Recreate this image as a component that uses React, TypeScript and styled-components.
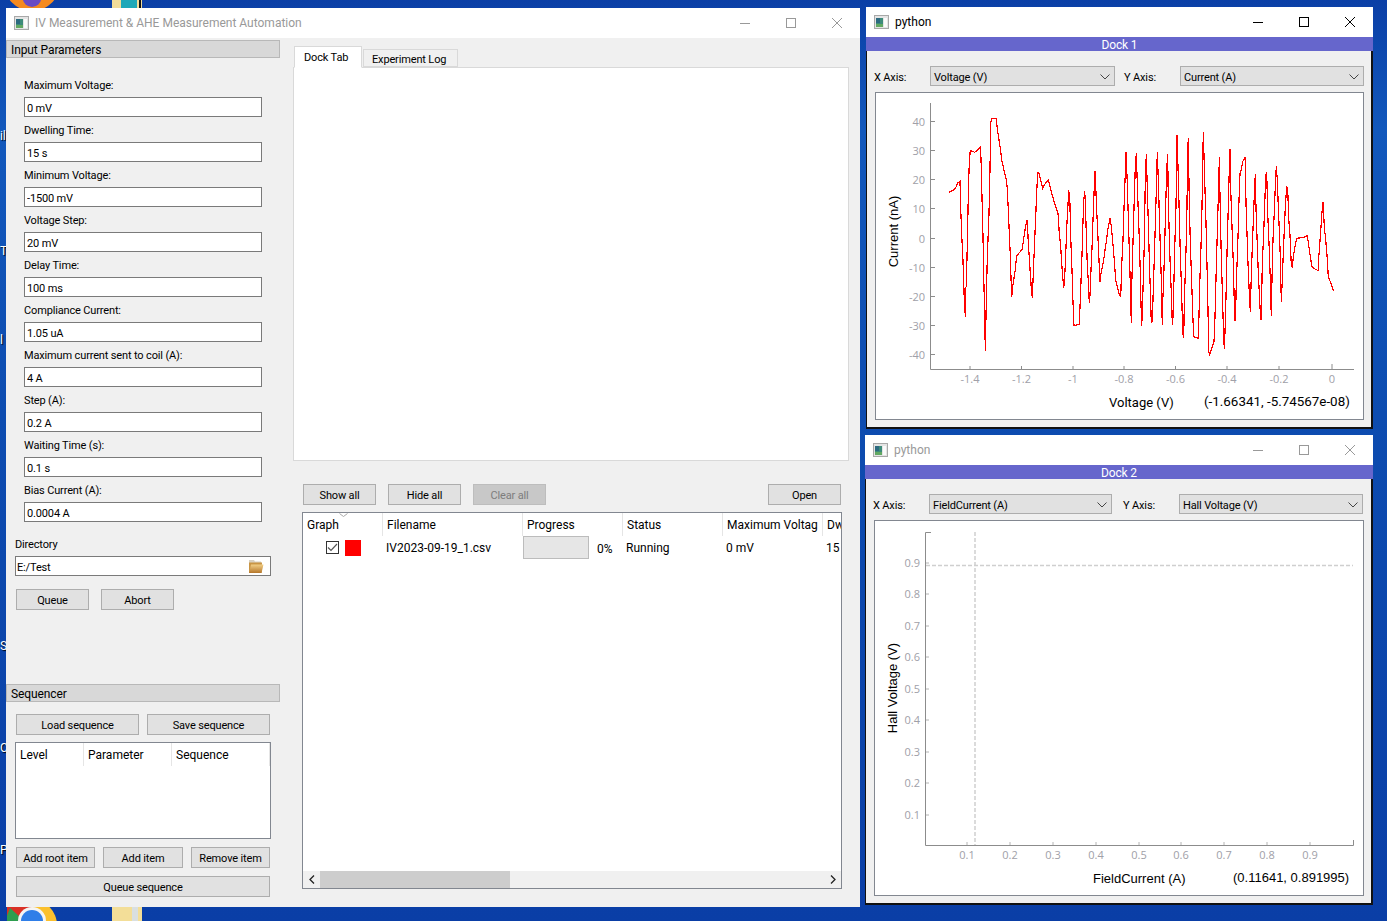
import styled, { createGlobalStyle } from 'styled-components';

const GlobalStyle = createGlobalStyle`
  html, body {
    margin: 0;
    padding: 0;
    width: 1387px;
    height: 921px;
    overflow: hidden;
  }
  * {
    box-sizing: border-box;
  }
  body {
    font-family: Roboto, 'Open Sans', sans-serif;
    font-size: 11px;
    letter-spacing: -0.15px;
    color: #000;
  }
`;

const PARAMETERS = [
  ['Maximum Voltage:', '0 mV'],
  ['Dwelling Time:', '15 s'],
  ['Minimum Voltage:', '-1500 mV'],
  ['Voltage Step:', '20 mV'],
  ['Delay Time:', '100 ms'],
  ['Compliance Current:', '1.05 uA'],
  ['Maximum current sent to coil (A):', '4 A'],
  ['Step (A):', '0.2 A'],
  ['Waiting Time (s):', '0.1 s'],
  ['Bias Current (A):', '0.0004 A'],
];

// traced from the reference, as page x/y * 3 relative to (870, 120)
const TRACE_A = [
  238,217, 246,212, 252,209, 258,201, 264,188, 270,184, 272,265, 275,345, 279,422, 281,500, 285,578, 287,590,
  285,505, 289,500, 291,413, 293,318, 295,222, 298,127, 301,91, 314,97, 325,88, 331,82, 333,115, 336,232,
  339,348, 341,466, 344,585, 346,692, 349,545, 352,413, 357,280, 360,147, 362,10, 365,-3, 378,-5, 384,40,
  391,85, 395,120, 402,150, 408,175, 412,205, 415,270, 418,340, 421,405, 423,475, 425,530, 428,500, 431,480,
  435,455, 440,407, 448,398, 457,388, 461,355, 466,325, 470,305, 472,300, 475,370, 478,415, 481,460, 484,505,
  487,533, 491,430, 494,360, 497,290, 500,215, 503,157, 506,157, 512,180, 518,205, 525,192, 535,180, 540,200,
  546,222, 552,245, 558,262, 564,280, 568,340, 572,380, 575,430, 578,470, 581,503, 583,490, 586,435, 590,325,
  593,268, 596,215, 599,220, 601,300, 603,375, 606,450, 608,525, 612,617, 628,613, 630,560, 633,485, 636,405,
  638,330, 641,245, 644,212, 646,245, 649,340, 652,435, 656,503, 658,550, 660,525, 663,450, 666,385, 669,300,
  672,220, 675,152, 678,220, 681,290, 684,355, 687,420, 690,485, 693,460, 697,440, 701,420, 705,390, 709,365,
  714,325, 720,295, 724,320, 727,350, 730,385, 733,420, 737,480, 742,500, 747,520, 752,532, 755,435, 759,360,
  762,265, 765,183, 768,97,
];

// same idea, relative to (1100, 120)
const TRACE_B = [
  82,190, 85,290, 88,390, 91,490, 93,585, 95,610, 94,535, 97,440, 100,335, 103,235, 106,140, 109,100, 112,190,
  115,275, 118,355, 121,460, 123,555, 125,617, 127,575, 130,480, 133,370, 136,180, 139,102, 142,205, 145,305,
  148,415, 151,510, 154,607, 157,605, 160,510, 163,415, 166,315, 169,210, 172,97, 175,180, 178,280, 181,380,
  184,480, 187,615, 186,580, 190,510, 193,420, 197,255, 200,150, 203,102, 205,245, 208,345, 211,445, 215,545,
  217,615, 219,590, 222,475, 225,355, 228,260, 231,45, 235,170, 238,285, 241,400, 245,525, 248,640, 251,655,
  253,550, 257,420, 260,320, 263,90, 265,55, 268,250, 271,365, 275,490, 279,600, 281,650, 295,655, 296,620,
  299,495, 303,380, 306,260, 310,37, 314,180, 318,310, 321,435, 324,570, 326,695, 329,705, 335,685, 342,665,
  345,590, 348,475, 351,370, 354,265, 357,160, 358,112, 361,280, 364,410, 367,510, 370,615, 373,688, 375,635,
  378,530, 381,400, 384,290, 387,180, 390,88, 392,205, 396,320, 400,430, 404,600, 407,600, 408,520, 411,435,
  414,350, 417,240, 420,160, 424,150, 428,125, 436,110, 438,250, 441,340, 444,430, 448,520, 451,575, 454,465,
  457,380, 460,305, 463,225, 466,162, 468,265, 471,350, 474,435, 478,520, 482,598, 484,598, 487,430, 491,340,
  494,255, 497,168, 500,157, 503,280, 507,370, 510,450, 514,587, 516,475, 519,360, 523,275, 526,200, 529,138,
  532,180, 535,260, 538,330, 541,410, 544,545, 547,480, 550,400, 553,330, 556,260, 560,202, 563,205, 566,295,
  570,345, 574,435, 577,443, 580,410, 585,380, 590,355, 612,352, 622,347, 626,375, 631,410, 636,440, 645,447,
  655,452, 656,415, 659,375, 662,335, 665,285, 669,245, 673,320, 677,360, 681,405, 685,470, 692,488, 701,514,
];

const toPoints = (trace: number[], ox: number, oy: number) => {
  const out: string[] = [];
  for (let i = 0; i < trace.length; i += 2) {
    out.push(`${(ox + trace[i] / 3).toFixed(1)},${(oy + trace[i + 1] / 3).toFixed(1)}`);
  }
  return out.join(' ');
};

const IV_POINTS = `${toPoints(TRACE_A, 870, 120)} ${toPoints(TRACE_B, 1100, 120)}`;

const WindowIcon = () => (
  <svg width="15" height="15" viewBox="0 0 15 15">
    <rect x="0.5" y="0.5" width="14" height="13" fill="#e4e4e4" stroke="#a8a8a8" />
    <rect x="2" y="3" width="7" height="9" fill="#3d8b7a" />
    <rect x="2" y="3" width="4" height="5" fill="#2c6a80" />
    <rect x="2" y="9" width="7" height="3" fill="#62a862" />
    <rect x="10" y="3" width="3" height="9" fill="#fafafa" />
  </svg>
);

const WindowButtons = ({ active }: { active?: boolean }) => {
  const stroke = active ? '#000' : '#999';
  return (
    <Caption>
      <CaptionButton>
        <svg width="10" height="10" viewBox="0 0 10 10">
          <path d="M0 5.5H10" stroke={stroke} fill="none" />
        </svg>
      </CaptionButton>
      <CaptionButton>
        <svg width="10" height="10" viewBox="0 0 10 10">
          <rect x="0.5" y="0.5" width="9" height="9" stroke={stroke} fill="none" />
        </svg>
      </CaptionButton>
      <CaptionButton>
        <svg width="10" height="10" viewBox="0 0 10 10">
          <path d="M0 0L10 10M10 0L0 10" stroke={stroke} fill="none" />
        </svg>
      </CaptionButton>
    </Caption>
  );
};

const Chevron = () => (
  <svg width="10" height="6" viewBox="0 0 10 6">
    <path d="M0.5 0.5L5 5L9.5 0.5" stroke="#444" fill="none" />
  </svg>
);

const FolderIcon = () => (
  <svg width="16" height="15" viewBox="0 0 16 15">
    <defs>
      <linearGradient id="folderFront" x1="0" y1="0" x2="0" y2="1">
        <stop offset="0" stopColor="#f2cf86" />
        <stop offset="1" stopColor="#b5762a" />
      </linearGradient>
    </defs>
    <path d="M1 1H6L7 2.5H13V6H1Z" fill="#d8d0c0" />
    <path d="M1 14L1 3.5H14L13.5 14Z" fill="#c99544" />
    <path d="M1 14L3 5.5H15.5L13.5 14Z" fill="url(#folderFront)" />
  </svg>
);

const DesktopIcons = () => (
  <>
    <DesktopIcon $left={4} $top={0} $width={56} $height={8}>
      <svg width="56" height="8" viewBox="0 0 56 8">
        <circle cx="28" cy="-17" r="28" fill="#f58a1f" />
        <circle cx="28" cy="-2.3" r="9.3" fill="#6a4bc4" />
      </svg>
    </DesktopIcon>
    <DesktopIcon $left={112} $top={0} $width={30} $height={8}>
      <svg width="30" height="8" viewBox="0 0 30 8">
        <rect x="0" y="0" width="30" height="8" fill="#f1dc9a" />
        <rect x="9" y="0" width="16" height="8" fill="#1fa8b8" />
        <rect x="27" y="0" width="2" height="8" fill="#111" />
      </svg>
    </DesktopIcon>
    <DesktopIcon $left={7} $top={905} $width={50} $height={16}>
      <svg width="50" height="16" viewBox="0 0 50 16">
        <circle cx="25" cy="20" r="25" fill="#fbc02d" />
        <path d="M25 20V-5H0V20Z" fill="#d93025" />
        <path d="M13 12L3 3L-2 16H13Z" fill="#2e9e4f" />
        <circle cx="25" cy="16" r="14" fill="#f4f4f4" />
        <circle cx="25" cy="16" r="11" fill="#2f7ee8" />
      </svg>
    </DesktopIcon>
    <DesktopIcon $left={112} $top={907} $width={30} $height={14}>
      <svg width="30" height="14" viewBox="0 0 30 14">
        <rect x="0" y="0" width="30" height="14" fill="#f3de98" />
        <rect x="20" y="0" width="6" height="14" fill="#d9dfe0" />
      </svg>
    </DesktopIcon>
    {[
      ['il', 129],
      ['T', 244],
      ['l', 333],
      ['S', 639],
      ['C', 741],
      ['P', 843],
    ].map(([text, top]) => (
      <EdgeLabel key={text} $top={top as number}>
        {text}
      </EdgeLabel>
    ))}
  </>
);

const Field = ({ label, value }: { label: string; value: string }) => (
  <FieldRow>
    <FieldLabel>{label}</FieldLabel>
    <TextInput readOnly value={value} />
  </FieldRow>
);

const MainWindow = () => (
  <Win $left={6} $top={8} $width={854} $height={899}>
    <TitleBar>
      <WindowIcon />
      <TitleText>IV Measurement &amp; AHE Measurement Automation</TitleText>
      <WindowButtons />
    </TitleBar>
    <MainBody>
      <LeftPane>
        <SectionHeader>Input Parameters</SectionHeader>
        <Form>
          {PARAMETERS.map(([label, value]) => (
            <Field key={label} label={label} value={value} />
          ))}
        </Form>
        <DirectoryBlock>
          <FieldLabel>Directory</FieldLabel>
          <DirectoryInput>
            <DirectoryText>E:/Test</DirectoryText>
            <FolderIcon />
          </DirectoryInput>
        </DirectoryBlock>
        <ButtonRow $top={13} $gap={12}>
          <PushButton $width={73}>Queue</PushButton>
          <PushButton $width={73}>Abort</PushButton>
        </ButtonRow>
        <SequencerBlock>
          <SectionHeader>Sequencer</SectionHeader>
          <ButtonRow $top={12} $gap={8}>
            <PushButton $width={123}>Load sequence</PushButton>
            <PushButton $width={123}>Save sequence</PushButton>
          </ButtonRow>
          <SequenceTree>
            <SeqHead $width={68}>Level</SeqHead>
            <SeqHead $width={88}>Parameter</SeqHead>
            <SeqHead $width={98}>Sequence</SeqHead>
          </SequenceTree>
          <ButtonRow $top={8} $gap={8}>
            <PushButton $width={79}>Add root item</PushButton>
            <PushButton $width={80}>Add item</PushButton>
            <PushButton $width={79}>Remove item</PushButton>
          </ButtonRow>
          <ButtonRow $top={8} $gap={0}>
            <PushButton $width={254}>Queue sequence</PushButton>
          </ButtonRow>
        </SequencerBlock>
      </LeftPane>
      <RightPane>
        <TabBar>
          <Tab $active>Dock Tab</Tab>
          <Tab>Experiment Log</Tab>
        </TabBar>
        <TabPane />
        <ResultsToolbar>
          <PushButton $width={73}>Show all</PushButton>
          <PushButton $width={73}>Hide all</PushButton>
          <PushButton $width={73} $disabled>
            Clear all
          </PushButton>
          <OpenButton $width={73}>Open</OpenButton>
        </ResultsToolbar>
        <ResultsTable>
          <SortArrow width="9" height="4" viewBox="0 0 9 4">
            <path d="M0.5 0.5L4.5 3.5L8.5 0.5" stroke="#a8a8a8" fill="none" />
          </SortArrow>
          <HeaderRow>
            <HeadCell $width={80}>Graph</HeadCell>
            <HeadCell $width={140}>Filename</HeadCell>
            <HeadCell $width={100}>Progress</HeadCell>
            <HeadCell $width={100}>Status</HeadCell>
            <HeadCell $width={100}>Maximum Voltag</HeadCell>
            <HeadCell $width={18} $last>
              Dw
            </HeadCell>
          </HeaderRow>
          <DataRow>
            <GraphCell>
              <CheckBox>
                <svg width="11" height="11" viewBox="0 0 11 11">
                  <path d="M1 5.5L4 8.5L10 2" stroke="#555" strokeWidth="1.2" fill="none" />
                </svg>
              </CheckBox>
              <Swatch />
            </GraphCell>
            <DataCell $width={140}>IV2023-09-19_1.csv</DataCell>
            <ProgressCell>
              <ProgressBar />
              <ProgressText>0%</ProgressText>
            </ProgressCell>
            <DataCell $width={100}>Running</DataCell>
            <DataCell $width={100}>0 mV</DataCell>
            <DataCell $width={18}>15</DataCell>
          </DataRow>
          <ScrollBar>
            <ScrollArrow>
              <svg width="6" height="9" viewBox="0 0 6 9">
                <path d="M5 0.5L1 4.5L5 8.5" stroke="#222" strokeWidth="1.3" fill="none" />
              </svg>
            </ScrollArrow>
            <ScrollTrack>
              <ScrollThumb />
            </ScrollTrack>
            <ScrollArrow>
              <svg width="6" height="9" viewBox="0 0 6 9">
                <path d="M1 0.5L5 4.5L1 8.5" stroke="#222" strokeWidth="1.3" fill="none" />
              </svg>
            </ScrollArrow>
          </ScrollBar>
        </ResultsTable>
      </RightPane>
    </MainBody>
  </Win>
);

const IvPlot = () => {
  const xTicks: [string, number][] = [
    ['-1.4', 970],
    ['-1.2', 1021.5],
    ['-1', 1073],
    ['-0.8', 1124],
    ['-0.6', 1175.5],
    ['-0.4', 1227],
    ['-0.2', 1279],
    ['0', 1332],
  ];
  const yTicks: [string, number][] = [
    ['40', 121.5],
    ['30', 150.5],
    ['20', 179.5],
    ['10', 208.5],
    ['0', 238.5],
    ['-10', 267.5],
    ['-20', 296.5],
    ['-30', 325.5],
    ['-40', 354.5],
  ];
  return (
    <PlotBox>
      <svg width="487" height="326" viewBox="876 93 487 326">
        <path d="M930.5 103V369.5H1354" stroke="#8c8c8c" fill="none" />
        {xTicks.map(([text, x]) => (
          <g key={text}>
            <path d={`M${x} 369V${text === '0' ? 364 : 366}`} stroke="#8c8c8c" />
            <TickText x={x} y={383} textAnchor="middle">
              {text}
            </TickText>
          </g>
        ))}
        {yTicks.map(([text, y]) => (
          <g key={text}>
            <path d={`M931 ${y}H935`} stroke="#8c8c8c" />
            <TickText x={925} y={y + 4} textAnchor="end">
              {text}
            </TickText>
          </g>
        ))}
        <polyline
          points={IV_POINTS}
          stroke="#ff0000"
          strokeWidth="1.2"
          fill="none"
          shapeRendering="crispEdges"
        />
        <AxisText $size={13} x={1109} y={407}>
          Voltage (V)
        </AxisText>
        <AxisText $size={13.4} x={1204} y={406}>
          (-1.66341, -5.74567e-08)
        </AxisText>
        <PlainAxisText x={0} y={0} textAnchor="middle" transform="translate(898 231.5) rotate(-90)">
          Current (nA)
        </PlainAxisText>
      </svg>
    </PlotBox>
  );
};

const HallPlot = () => {
  const xTicks: [string, number][] = [
    ['0.1', 967],
    ['0.2', 1010],
    ['0.3', 1053],
    ['0.4', 1096],
    ['0.5', 1139],
    ['0.6', 1181],
    ['0.7', 1224],
    ['0.8', 1267],
    ['0.9', 1310],
  ];
  const yTicks: [string, number][] = [
    ['0.9', 563],
    ['0.8', 594],
    ['0.7', 626],
    ['0.6', 657],
    ['0.5', 689],
    ['0.4', 720],
    ['0.3', 752],
    ['0.2', 783],
    ['0.1', 815],
  ];
  return (
    <PlotBox>
      <svg width="488" height="374" viewBox="875 521 488 374">
        <path d="M931 532.5H925.5V845.5H1353.5V840" stroke="#8c8c8c" fill="none" />
        {xTicks.map(([text, x]) => (
          <g key={text}>
            <path d={`M${x} 845V842`} stroke="#b4b4b4" />
            <TickText x={x} y={859} textAnchor="middle">
              {text}
            </TickText>
          </g>
        ))}
        {yTicks.map(([text, y]) => (
          <g key={text}>
            <path d={`M926 ${y}H929`} stroke="#b4b4b4" />
            <TickText x={920} y={y + 4} textAnchor="end">
              {text}
            </TickText>
          </g>
        ))}
        <path
          d="M975 532V845M926 565.5H1353"
          stroke="#cfcfcf"
          strokeWidth="1.5"
          strokeDasharray="4 2"
          fill="none"
        />
        <PlainAxisText x={1093} y={883}>
          FieldCurrent (A)
        </PlainAxisText>
        <PlainAxisText x={1233} y={882}>
          (0.11641, 0.891995)
        </PlainAxisText>
        <PlainAxisText x={0} y={0} textAnchor="middle" transform="translate(897 688) rotate(-90)">
          Hall Voltage (V)
        </PlainAxisText>
      </svg>
    </PlotBox>
  );
};

const App = () => (
  <>
    <GlobalStyle />
    <Desktop>
      <DesktopIcons />
      <MainWindow />
      <Win $left={866} $top={7} $width={507} $height={422}>
        <TitleBar>
          <WindowIcon />
          <TitleText $active>python</TitleText>
          <WindowButtons active />
        </TitleBar>
        <DockBar>Dock 1</DockBar>
        <DockBody>
          <AxisRow>
            <AxisLabel>X Axis:</AxisLabel>
            <ComboBox $width={185}>
              Voltage (V)
              <Chevron />
            </ComboBox>
            <AxisLabel $gap={9}>Y Axis:</AxisLabel>
            <ComboBox $width={184}>
              Current (A)
              <Chevron />
            </ComboBox>
          </AxisRow>
          <IvPlot />
        </DockBody>
      </Win>
      <Win $left={865} $top={435} $width={508} $height={470}>
        <TitleBar>
          <WindowIcon />
          <TitleText>python</TitleText>
          <WindowButtons />
        </TitleBar>
        <DockBar>Dock 2</DockBar>
        <DockBody>
          <AxisRow>
            <AxisLabel>X Axis:</AxisLabel>
            <ComboBox $width={183}>
              FieldCurrent (A)
              <Chevron />
            </ComboBox>
            <AxisLabel $gap={11}>Y Axis:</AxisLabel>
            <ComboBox $width={184}>
              Hall Voltage (V)
              <Chevron />
            </ComboBox>
          </AxisRow>
          <HallPlot />
        </DockBody>
      </Win>
    </Desktop>
  </>
);

export default App;

const Desktop = styled.div`
  position: relative;
  width: 1387px;
  height: 921px;
  overflow: hidden;
  background: linear-gradient(180deg, #0b3fa6 0%, #1258bc 14%, #0d4cb0 45%, #0a3ea6 100%);
`;
const DesktopIcon = styled.div<{ $left: number; $top: number; $width: number; $height: number }>`
  position: absolute;
  left: ${props => props.$left}px;
  top: ${props => props.$top}px;
  width: ${props => props.$width}px;
  height: ${props => props.$height}px;
  overflow: hidden;
  svg {
    display: block;
  }
`;
const EdgeLabel = styled.span<{ $top: number }>`
  position: absolute;
  left: 0;
  top: ${props => props.$top}px;
  color: #fff;
  font-size: 12px;
  line-height: 14px;
  text-shadow: 1px 1px 1px #000;
`;
const Win = styled.div<{ $left: number; $top: number; $width: number; $height: number }>`
  position: absolute;
  left: ${props => props.$left}px;
  top: ${props => props.$top}px;
  width: ${props => props.$width}px;
  height: ${props => props.$height}px;
  display: flex;
  flex-direction: column;
  background-color: #f0f0f0;
`;
const TitleBar = styled.div`
  flex: none;
  display: flex;
  align-items: center;
  height: 30px;
  padding-left: 8px;
  background-color: #fff;
`;
const TitleText = styled.span<{ $active?: boolean }>`
  margin-left: 6px;
  flex: auto;
  font-size: 12px;
  letter-spacing: 0;
  color: ${props => (props.$active ? '#000' : '#999')};
`;
const Caption = styled.div`
  display: flex;
  height: 100%;
`;
const CaptionButton = styled.div`
  width: 46px;
  display: flex;
  align-items: center;
  justify-content: center;
  svg {
    display: block;
  }
`;
const MainBody = styled.div`
  flex: auto;
  display: flex;
  min-height: 0;
`;
const LeftPane = styled.div`
  flex: none;
  width: 274px;
  display: flex;
  flex-direction: column;
  padding: 2px 0 10px;
`;
const SectionHeader = styled.div`
  flex: none;
  height: 18px;
  padding-left: 4px;
  line-height: 19px;
  font-size: 12px;
  letter-spacing: -0.1px;
  background-color: #d8d8d8;
  border: 1px solid #b8b8b8;
`;
const Form = styled.div`
  padding: 14px 0 0 18px;
`;
const FieldRow = styled.div`
  width: 238px;
`;
const FieldLabel = styled.label`
  display: block;
  height: 25px;
  line-height: 27px;
  white-space: nowrap;
`;
const TextInput = styled.input`
  display: block;
  width: 100%;
  height: 20px;
  padding: 2px 2px 0;
  font: inherit;
  letter-spacing: inherit;
  color: #000;
  background-color: #fff;
  border: 1px solid #7a7a7a;
  border-radius: 0;
  outline: none;
`;
const DirectoryBlock = styled.div`
  margin: 9px 0 0 9px;
  width: 256px;
`;
const DirectoryInput = styled.div`
  display: flex;
  align-items: center;
  justify-content: space-between;
  height: 20px;
  padding: 0 6px 0 1px;
  background-color: #fff;
  border: 1px solid #7a7a7a;
`;
const DirectoryText = styled.span`
  padding-top: 2px;
`;
const ButtonRow = styled.div<{ $top: number; $gap: number }>`
  flex: none;
  display: flex;
  gap: ${props => props.$gap}px;
  margin: ${props => props.$top}px 0 0 10px;
`;
const PushButton = styled.div<{ $width: number; $disabled?: boolean }>`
  flex: none;
  width: ${props => props.$width}px;
  height: 21px;
  line-height: 21px;
  text-align: center;
  color: ${props => (props.$disabled ? '#7d7d7d' : '#000')};
  background-color: ${props => (props.$disabled ? '#c8c8c8' : '#e1e1e1')};
  border: 1px solid ${props => (props.$disabled ? '#bdbdbd' : '#adadad')};
`;
const OpenButton = styled(PushButton)`
  margin-left: auto;
`;
const SequencerBlock = styled.div`
  margin-top: auto;
  display: flex;
  flex-direction: column;
`;
const SequenceTree = styled.div`
  flex: none;
  display: flex;
  align-items: flex-start;
  margin: 7px 0 0 9px;
  width: 256px;
  height: 97px;
  font-size: 12px;
  letter-spacing: 0;
  background-color: #fff;
  border: 1px solid #828790;
`;
const SeqHead = styled.div<{ $width: number }>`
  width: ${props => props.$width}px;
  height: 23px;
  line-height: 25px;
  padding-left: 4px;
  border-right: 1px solid #e5e5e5;
`;
const RightPane = styled.div`
  flex: auto;
  display: flex;
  flex-direction: column;
  min-width: 0;
  padding: 8px 11px 0 13px;
`;
const TabBar = styled.div`
  flex: none;
  display: flex;
  align-items: flex-end;
  height: 21px;
  padding-left: 1px;
`;
const Tab = styled.div<{ $active?: boolean }>`
  height: ${props => (props.$active ? 22 : 18)}px;
  margin-bottom: ${props => (props.$active ? -1 : 0)}px;
  margin-right: 1px;
  padding: 0 ${props => (props.$active ? 9 : 8)}px;
  width: ${props => (props.$active ? 68 : 95)}px;
  line-height: ${props => (props.$active ? 22 : 19)}px;
  white-space: nowrap;
  background-color: ${props => (props.$active ? '#fff' : '#f0f0f0')};
  border: 1px solid #d9d9d9;
  border-bottom-color: ${props => (props.$active ? '#fff' : '#d9d9d9')};
  position: relative;
  z-index: ${props => (props.$active ? 1 : 0)};
`;
const TabPane = styled.div`
  flex: none;
  height: 394px;
  background-color: #fff;
  border: 1px solid #d9d9d9;
`;
const ResultsToolbar = styled.div`
  flex: none;
  display: flex;
  gap: 12px;
  margin-top: 23px;
  padding: 0 8px 0 10px;
`;
const ResultsTable = styled.div`
  position: relative;
  flex: none;
  display: flex;
  flex-direction: column;
  width: 540px;
  height: 377px;
  margin: 7px 0 0 9px;
  font-size: 12px;
  letter-spacing: 0;
  background-color: #fff;
  border: 1px solid #828790;
`;
const SortArrow = styled.svg`
  position: absolute;
  left: 36px;
  top: 0;
`;
const HeaderRow = styled.div`
  flex: none;
  display: flex;
  height: 23px;
  overflow: hidden;
`;
const HeadCell = styled.div<{ $width: number; $last?: boolean }>`
  flex: none;
  width: ${props => props.$width}px;
  padding-left: 4px;
  line-height: 25px;
  white-space: nowrap;
  overflow: hidden;
  border-right: ${props => (props.$last ? 'none' : '1px solid #e5e5e5')};
`;
const DataRow = styled.div`
  flex: none;
  display: flex;
  height: 23px;
  overflow: hidden;
`;
const GraphCell = styled.div`
  flex: none;
  width: 80px;
  display: flex;
  align-items: center;
  gap: 6px;
  padding-left: 23px;
`;
const CheckBox = styled.div`
  width: 13px;
  height: 13px;
  display: flex;
  align-items: center;
  justify-content: center;
  border: 1px solid #333;
  background-color: #fff;
`;
const Swatch = styled.div`
  width: 16px;
  height: 16px;
  background-color: #ff0000;
`;
const DataCell = styled.div<{ $width: number }>`
  flex: none;
  width: ${props => props.$width}px;
  padding-left: 3px;
  line-height: 25px;
  white-space: nowrap;
`;
const ProgressCell = styled.div`
  flex: none;
  width: 100px;
  display: flex;
  align-items: center;
  gap: 8px;
`;
const ProgressBar = styled.div`
  width: 66px;
  height: 23px;
  background-color: #e6e6e6;
  border: 1px solid #bcbcbc;
`;
const ProgressText = styled.span`
  padding-top: 2px;
`;
const ScrollBar = styled.div`
  margin-top: auto;
  flex: none;
  display: flex;
  height: 17px;
  background-color: #f0f0f0;
`;
const ScrollArrow = styled.div`
  flex: none;
  width: 17px;
  display: flex;
  align-items: center;
  justify-content: center;
`;
const ScrollTrack = styled.div`
  flex: auto;
`;
const ScrollThumb = styled.div`
  width: 190px;
  height: 100%;
  background-color: #cdcdcd;
`;
const DockBar = styled.div`
  flex: none;
  height: 14px;
  line-height: 16px;
  text-align: center;
  color: #fff;
  font-size: 12px;
  background-color: #6666cc;
`;
const DockBody = styled.div`
  flex: auto;
  display: flex;
  flex-direction: column;
  padding: 15px 8px 0 7px;
  border-left: 1px solid #111;
  border-right: 2px solid #111;
  border-bottom: 2px solid #111;
`;
const AxisRow = styled.div`
  flex: none;
  display: flex;
  align-items: center;
  height: 20px;
`;
const AxisLabel = styled.span<{ $gap?: number }>`
  flex: none;
  width: 56px;
  padding-top: 2px;
  margin-left: ${props => props.$gap ?? 0}px;
`;
const ComboBox = styled.div<{ $width: number }>`
  flex: none;
  display: flex;
  align-items: center;
  justify-content: space-between;
  width: ${props => props.$width}px;
  height: 20px;
  padding: 2px 4px 0 3px;
  background-color: #e1e1e1;
  border: 1px solid #adadad;
`;
const PlotBox = styled.div`
  flex: none;
  margin: 6px 0 0 1px;
  width: max-content;
  background-color: #fff;
  border: 1px solid #828790;
  svg {
    display: block;
  }
`;
const TickText = styled.text`
  font-family: 'Open Sans', sans-serif;
  font-size: 11px;
  letter-spacing: 0;
  fill: #a0a0a8;
`;
const AxisText = styled.text<{ $size: number }>`
  font-family: Roboto, sans-serif;
  font-size: ${props => props.$size}px;
  letter-spacing: 0;
  fill: #000;
`;
const PlainAxisText = styled.text`
  font-family: 'Liberation Sans', sans-serif;
  font-size: 13px;
  letter-spacing: 0;
  fill: #000;
`;
